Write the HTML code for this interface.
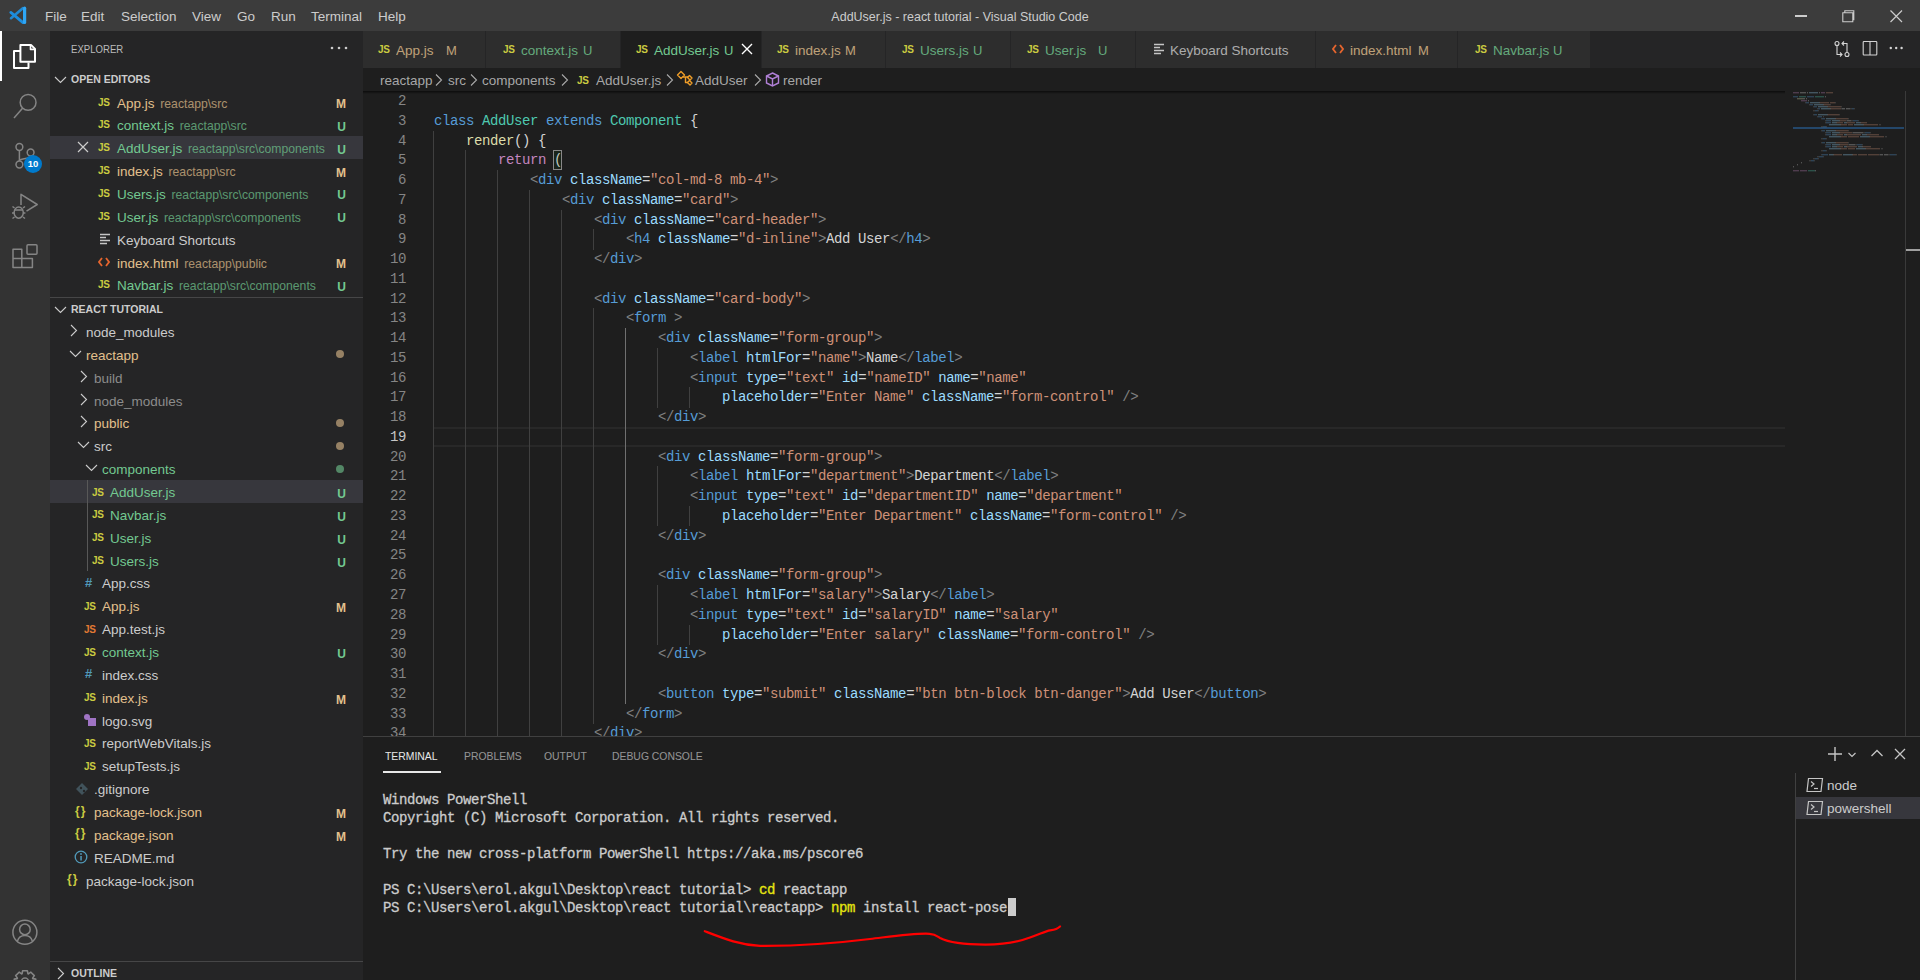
<!DOCTYPE html><html><head><meta charset="utf-8"><style>
*{margin:0;padding:0;box-sizing:border-box}
html,body{width:1920px;height:980px;overflow:hidden;background:#1e1e1e}
body{position:relative;font-family:"Liberation Sans",sans-serif;color:#cccccc}
.a{position:absolute;white-space:pre}
.m{font-family:"Liberation Mono",monospace}
.js{position:absolute;font-weight:bold;font-size:10px;line-height:10px;color:#cbcb41;letter-spacing:-0.3px}
.ln{position:absolute;left:363px;width:43px;text-align:right;font-family:"Liberation Mono",monospace;font-size:14px;letter-spacing:-0.4px;line-height:19.76px;color:#858585;transform:translateY(1px)}
.cl{position:absolute;left:434px;font-family:"Liberation Mono",monospace;font-size:14px;letter-spacing:-0.4px;line-height:19.76px;color:#d4d4d4;white-space:pre;transform:translateY(1px)}
.ig{position:absolute;width:1px;background:#404040}
.k{color:#569cd6}.c{color:#4ec9b0}.p{color:#c586c0}.f{color:#dcdcaa}.g{color:#808080}.t{color:#569cd6}.at{color:#9cdcfe}.s{color:#ce9178}.w{color:#d4d4d4}
.row{position:absolute;height:23px;line-height:23px;font-size:13.5px;white-space:pre;transform:translateY(0.6px)}
.desc{font-size:12.2px;opacity:0.7;margin-left:2px}
.badge{position:absolute;left:320px;width:26px;text-align:right;font-size:12px;font-weight:bold;line-height:23px;transform:translateY(2.5px)}
.dot{position:absolute;left:336px;width:8px;height:8px;border-radius:4px}
</style></head><body><div class="a" style="left:0;top:0;width:1920px;height:31px;background:#3c3c3c"></div><div class="a" style="left:0;top:31px;width:50px;height:949px;background:#333333"></div><div class="a" style="left:50px;top:31px;width:313px;height:949px;background:#252526"></div><div class="a" style="left:363px;top:31px;width:1557px;height:37px;background:#252526"></div><svg class="a" style="left:0;top:0" width="40" height="31" viewBox="0 0 40 31">
<path d="M11 18.2L22.8 8.2" stroke="#2189d1" stroke-width="2.6" stroke-linecap="round"/>
<path d="M10.8 12.4L23 22.6" stroke="#1c8ee0" stroke-width="2.8" stroke-linecap="round"/>
<path d="M24.6 8.2V22.4" stroke="#2ea6f5" stroke-width="3.2" stroke-linecap="round"/>
</svg><div class="a" style="left:45px;top:8px;font-size:13.5px;line-height:17px;color:#cccccc">File</div><div class="a" style="left:81px;top:8px;font-size:13.5px;line-height:17px;color:#cccccc">Edit</div><div class="a" style="left:121px;top:8px;font-size:13.5px;line-height:17px;color:#cccccc">Selection</div><div class="a" style="left:192px;top:8px;font-size:13.5px;line-height:17px;color:#cccccc">View</div><div class="a" style="left:237px;top:8px;font-size:13.5px;line-height:17px;color:#cccccc">Go</div><div class="a" style="left:271px;top:8px;font-size:13.5px;line-height:17px;color:#cccccc">Run</div><div class="a" style="left:311px;top:8px;font-size:13.5px;line-height:17px;color:#cccccc">Terminal</div><div class="a" style="left:378px;top:8px;font-size:13.5px;line-height:17px;color:#cccccc">Help</div><div class="a" style="left:0;top:8px;width:1920px;text-align:center;font-size:13.5px;line-height:17px;color:#cccccc;transform:scaleX(0.925)">AddUser.js - react tutorial - Visual Studio Code</div><div class="a" style="left:1795px;top:15px;width:12px;height:1.6px;background:#cccccc"></div><svg class="a" style="left:1842px;top:9px" width="13" height="14"><path d="M0.8 3.8h10v9h-10z M2.8 3.8v-2h9v9h-1" fill="none" stroke="#cccccc" stroke-width="1.1"/></svg><svg class="a" style="left:1890px;top:9.5px" width="13" height="13"><path d="M0.5 0.5L12 12M12 0.5L0.5 12" stroke="#cccccc" stroke-width="1.2"/></svg><div class="a" style="left:0;top:31px;width:2px;height:50px;background:#ffffff"></div><svg class="a" style="left:0;top:0" width="50" height="980" viewBox="0 0 50 980" fill="none" stroke-linejoin="round">
<g stroke="#ffffff" stroke-width="2">
<path d="M20.4 44.9H31L35 48.9V61.8H20.4Z"/><path d="M30.5 45V49.4H35" stroke-width="1.6"/>
<path d="M20.4 51H14V68H28.5V62.5"/>
</g>
<g stroke="#858585" stroke-width="1.5">
<circle cx="28.1" cy="102.4" r="7.9"/><path d="M22.5 108.3L14 118"/>
<circle cx="19.4" cy="147" r="3.4"/><circle cx="30.6" cy="152.5" r="3.4"/><circle cx="19.4" cy="164.5" r="3.4"/>
<path d="M19.4 150.4V161.1"/><path d="M30.6 155.9C30.6 159 24 158 19.6 160"/>
<path d="M21 205V194.3L37.2 204.5L26.5 211.1"/>
<ellipse cx="18.7" cy="212.6" rx="4.6" ry="5.6"/><path d="M14.5 210H23M12.5 206.5L14.5 208M25 206.5L23 208M12 213H14.2M23.2 213H25.4M12.5 218.5L14.5 217M25 218.5L23 217"/>
<path d="M13 249.2H21.8V267.6H13Z M13 258.4H32.4V267.6H21.8"/><rect x="27" y="244.8" width="10" height="9.5" rx="1"/>
<circle cx="24.9" cy="932.2" r="12"/><circle cx="24.9" cy="929.4" r="5.3"/><path d="M17.5 941C19.5 933.5 30.3 933.5 32.3 941"/>
<path d="M22.1 973.7 L22.6 970.8 L27.4 970.8 L27.9 973.7 L28.4 973.9 L30.9 972.2 L34.3 975.6 L32.6 978.1 L32.8 978.6 L35.7 979.1 L35.7 983.9 L32.8 984.4 L32.6 984.9 L34.3 987.4 L30.9 990.8 L28.4 989.1 L27.9 989.3 L27.4 992.2 L22.6 992.2 L22.1 989.3 L21.6 989.1 L19.1 990.8 L15.7 987.4 L17.4 984.9 L17.2 984.4 L14.3 983.9 L14.3 979.1 L17.2 978.6 L17.4 978.1 L15.7 975.6 L19.1 972.2 L21.6 973.9Z" stroke-width="1.6"/><circle cx="25" cy="981.5" r="3.5"/>
</g>
</svg><div class="a" style="left:24px;top:155px;width:18px;height:18px;border-radius:9px;background:#007acc;color:#fff;font-size:9.5px;font-weight:bold;line-height:18px;text-align:center">10</div><div class="a" style="left:71px;top:42px;font-size:11.3px;line-height:15px;color:#bbbbbb;transform:scaleX(0.85);transform-origin:0 0">EXPLORER</div><svg class="a" style="left:330px;top:46px" width="18" height="4"><circle cx="2" cy="2" r="1.3" fill="#cccccc"/><circle cx="9" cy="2" r="1.3" fill="#cccccc"/><circle cx="16" cy="2" r="1.3" fill="#cccccc"/></svg><svg class="a" style="left:54px;top:73px" width="13" height="13"><path d="M1 4L6.5 9.5L12 4" fill="none" stroke="#cccccc" stroke-width="1.1"/></svg><div class="a" style="left:71px;top:68px;height:23px;line-height:23px;font-size:11.3px;font-weight:bold;color:#cccccc;transform:scaleX(0.93);transform-origin:0 0">OPEN EDITORS</div><div class="js" style="left:98px;top:97.5px">JS</div><div class="row" style="left:117px;top:90.60px;color:#e2c08d">App.js <span class="desc">reactapp\src</span></div><div class="badge" style="top:90.00px;color:#e2c08d">M</div><div class="js" style="left:98px;top:120.36px">JS</div><div class="row" style="left:117px;top:113.46px;color:#73c991">context.js <span class="desc">reactapp\src</span></div><div class="badge" style="top:112.86px;color:#73c991">U</div><div class="a" style="left:50px;top:135.72px;width:313px;height:23px;background:#37373d"></div><svg class="a" style="left:77px;top:141.22px" width="12" height="12"><path d="M1 1L11 11M11 1L1 11" stroke="#cccccc" stroke-width="1.2"/></svg><div class="js" style="left:98px;top:143.22px">JS</div><div class="row" style="left:117px;top:136.32px;color:#73c991">AddUser.js <span class="desc">reactapp\src\components</span></div><div class="badge" style="top:135.72px;color:#73c991">U</div><div class="js" style="left:98px;top:166.07999999999998px">JS</div><div class="row" style="left:117px;top:159.18px;color:#e2c08d">index.js <span class="desc">reactapp\src</span></div><div class="badge" style="top:158.58px;color:#e2c08d">M</div><div class="js" style="left:98px;top:188.94px">JS</div><div class="row" style="left:117px;top:182.04px;color:#73c991">Users.js <span class="desc">reactapp\src\components</span></div><div class="badge" style="top:181.44px;color:#73c991">U</div><div class="js" style="left:98px;top:211.8px">JS</div><div class="row" style="left:117px;top:204.90px;color:#73c991">User.js <span class="desc">reactapp\src\components</span></div><div class="badge" style="top:204.30px;color:#73c991">U</div><svg class="a" style="left:100px;top:232.66px" width="12" height="12"><path d="M0 1.5H10M0 4.5H6M0 7.5H10M0 10.5H7" stroke="#c5c5c5" stroke-width="1.5"/></svg><div class="row" style="left:117px;top:227.76px;color:#cccccc">Keyboard Shortcuts</div><svg class="a" style="left:98px;top:256.52px" width="12" height="10"><path d="M4 1L1 5L4 9M8 1L11 5L8 9" fill="none" stroke="#e5652e" stroke-width="1.8"/></svg><div class="row" style="left:117px;top:250.62px;color:#e2c08d">index.html <span class="desc">reactapp\public</span></div><div class="badge" style="top:250.02px;color:#e2c08d">M</div><div class="js" style="left:98px;top:280.38px">JS</div><div class="row" style="left:117px;top:273.48px;color:#73c991">Navbar.js <span class="desc">reactapp\src\components</span></div><div class="badge" style="top:272.88px;color:#73c991">U</div><div class="a" style="left:50px;top:297px;width:313px;height:1px;background:rgba(204,204,204,0.2)"></div><svg class="a" style="left:54px;top:303px" width="13" height="13"><path d="M1 4L6.5 9.5L12 4" fill="none" stroke="#cccccc" stroke-width="1.1"/></svg><div class="a" style="left:71px;top:298px;height:23px;line-height:23px;font-size:11.3px;font-weight:bold;color:#cccccc;transform:scaleX(0.93);transform-origin:0 0">REACT TUTORIAL</div><svg class="a" style="left:67px;top:324.0px" width="13" height="13"><path d="M4 1L9.5 6.5L4 12" fill="none" stroke="#cccccc" stroke-width="1.1"/></svg><div class="row" style="left:86px;top:320.00px;color:#cccccc">node_modules</div><svg class="a" style="left:69px;top:346.86px" width="13" height="13"><path d="M1 4L6.5 9.5L12 4" fill="none" stroke="#cccccc" stroke-width="1.1"/></svg><div class="row" style="left:86px;top:342.86px;color:#e2c08d">reactapp</div><div class="dot" style="top:350.36px;background:rgba(226,192,141,0.6)"></div><svg class="a" style="left:77px;top:369.72px" width="13" height="13"><path d="M4 1L9.5 6.5L4 12" fill="none" stroke="#cccccc" stroke-width="1.1"/></svg><div class="row" style="left:94px;top:365.72px;color:#8c8c8c">build</div><svg class="a" style="left:77px;top:392.58px" width="13" height="13"><path d="M4 1L9.5 6.5L4 12" fill="none" stroke="#cccccc" stroke-width="1.1"/></svg><div class="row" style="left:94px;top:388.58px;color:#8c8c8c">node_modules</div><svg class="a" style="left:77px;top:415.44px" width="13" height="13"><path d="M4 1L9.5 6.5L4 12" fill="none" stroke="#cccccc" stroke-width="1.1"/></svg><div class="row" style="left:94px;top:411.44px;color:#e2c08d">public</div><div class="dot" style="top:418.94px;background:rgba(226,192,141,0.6)"></div><svg class="a" style="left:77px;top:438.3px" width="13" height="13"><path d="M1 4L6.5 9.5L12 4" fill="none" stroke="#cccccc" stroke-width="1.1"/></svg><div class="row" style="left:94px;top:434.30px;color:#cccccc">src</div><div class="dot" style="top:441.80px;background:rgba(226,192,141,0.6)"></div><svg class="a" style="left:85px;top:461.15999999999997px" width="13" height="13"><path d="M1 4L6.5 9.5L12 4" fill="none" stroke="#cccccc" stroke-width="1.1"/></svg><div class="row" style="left:102px;top:457.16px;color:#73c991">components</div><div class="dot" style="top:464.66px;background:rgba(115,201,145,0.6)"></div><div class="a" style="left:50px;top:480.02px;width:313px;height:23px;background:#37373d"></div><div class="js" style="left:92px;top:487.52px">JS</div><div class="row" style="left:110px;top:480.02px;color:#73c991">AddUser.js</div><div class="badge" style="top:480.02px;color:#73c991">U</div><div class="js" style="left:92px;top:510.38px">JS</div><div class="row" style="left:110px;top:502.88px;color:#73c991">Navbar.js</div><div class="badge" style="top:502.88px;color:#73c991">U</div><div class="js" style="left:92px;top:533.24px">JS</div><div class="row" style="left:110px;top:525.74px;color:#73c991">User.js</div><div class="badge" style="top:525.74px;color:#73c991">U</div><div class="js" style="left:92px;top:556.1px">JS</div><div class="row" style="left:110px;top:548.60px;color:#73c991">Users.js</div><div class="badge" style="top:548.60px;color:#73c991">U</div><div class="a" style="left:85px;top:574.96px;font-size:13px;font-weight:bold;line-height:15px;color:#519aba">#</div><div class="row" style="left:102px;top:571.46px;color:#cccccc">App.css</div><div class="js" style="left:84px;top:601.8199999999999px">JS</div><div class="row" style="left:102px;top:594.32px;color:#e2c08d">App.js</div><div class="badge" style="top:594.32px;color:#e2c08d">M</div><div class="js" style="left:84px;top:624.6800000000001px;color:#e37933">JS</div><div class="row" style="left:102px;top:617.18px;color:#cccccc">App.test.js</div><div class="js" style="left:84px;top:647.54px">JS</div><div class="row" style="left:102px;top:640.04px;color:#73c991">context.js</div><div class="badge" style="top:640.04px;color:#73c991">U</div><div class="a" style="left:85px;top:666.4px;font-size:13px;font-weight:bold;line-height:15px;color:#519aba">#</div><div class="row" style="left:102px;top:662.90px;color:#cccccc">index.css</div><div class="js" style="left:84px;top:693.26px">JS</div><div class="row" style="left:102px;top:685.76px;color:#e2c08d">index.js</div><div class="badge" style="top:685.76px;color:#e2c08d">M</div><svg class="a" style="left:83px;top:713.12px" width="14" height="14"><circle cx="4" cy="4" r="3" fill="#a074c4"/><rect x="5" y="5" width="8" height="8" fill="#a074c4"/></svg><div class="row" style="left:102px;top:708.62px;color:#cccccc">logo.svg</div><div class="js" style="left:84px;top:738.98px">JS</div><div class="row" style="left:102px;top:731.48px;color:#cccccc">reportWebVitals.js</div><div class="js" style="left:84px;top:761.8399999999999px">JS</div><div class="row" style="left:102px;top:754.34px;color:#cccccc">setupTests.js</div><svg class="a" style="left:75px;top:781.7px" width="14" height="14"><path d="M7 1L13 7L7 13L1 7Z" fill="#41535b"/><circle cx="6" cy="6" r="1.2" fill="#252526"/><circle cx="9" cy="9" r="1.2" fill="#252526"/></svg><div class="row" style="left:94px;top:777.20px;color:#cccccc">.gitignore</div><div class="a" style="left:75px;top:803.56px;font-size:12px;font-weight:bold;line-height:15px;color:#cbcb41;letter-spacing:1px">{}</div><div class="row" style="left:94px;top:800.06px;color:#e2c08d">package-lock.json</div><div class="badge" style="top:800.06px;color:#e2c08d">M</div><div class="a" style="left:75px;top:826.42px;font-size:12px;font-weight:bold;line-height:15px;color:#cbcb41;letter-spacing:1px">{}</div><div class="row" style="left:94px;top:822.92px;color:#e2c08d">package.json</div><div class="badge" style="top:822.92px;color:#e2c08d">M</div><svg class="a" style="left:74px;top:850.28px" width="14" height="14"><circle cx="7" cy="7" r="5.8" fill="none" stroke="#519aba" stroke-width="1.3"/><rect x="6.3" y="6" width="1.5" height="4.5" fill="#519aba"/><circle cx="7" cy="4" r="0.9" fill="#519aba"/></svg><div class="row" style="left:94px;top:845.78px;color:#cccccc">README.md</div><div class="a" style="left:67px;top:872.14px;font-size:12px;font-weight:bold;line-height:15px;color:#cbcb41;letter-spacing:1px">{}</div><div class="row" style="left:86px;top:868.64px;color:#cccccc">package-lock.json</div><div class="a" style="left:87px;top:480.02px;width:1px;height:91.44px;background:#585858"></div><div class="a" style="left:50px;top:961px;width:313px;height:1px;background:rgba(204,204,204,0.2)"></div><svg class="a" style="left:54px;top:967px" width="13" height="13"><path d="M4 1L9.5 6.5L4 12" fill="none" stroke="#cccccc" stroke-width="1.1"/></svg><div class="a" style="left:71px;top:962px;height:23px;line-height:23px;font-size:11.3px;font-weight:bold;color:#cccccc;transform:scaleX(0.93);transform-origin:0 0">OUTLINE</div><div class="a" style="left:363px;top:31px;width:122px;height:37px;background:#2d2d2d"></div><div class="js" style="left:378px;top:45px">JS</div><div class="a" style="left:396px;top:42px;font-size:13.5px;line-height:18px;color:#e2c08d;opacity:0.8">App.js</div><div class="a" style="left:446px;top:42px;font-size:13px;line-height:18px;color:#e2c08d;opacity:0.8">M</div><div class="a" style="left:486px;top:31px;width:134px;height:37px;background:#2d2d2d"></div><div class="js" style="left:503px;top:45px">JS</div><div class="a" style="left:521px;top:42px;font-size:13.5px;line-height:18px;color:#73c991;opacity:0.8">context.js</div><div class="a" style="left:583px;top:42px;font-size:13px;line-height:18px;color:#73c991;opacity:0.8">U</div><div class="a" style="left:621px;top:31px;width:140px;height:37px;background:#1e1e1e"></div><div class="js" style="left:636px;top:45px">JS</div><div class="a" style="left:654px;top:42px;font-size:13.5px;line-height:18px;color:#73c991;opacity:1">AddUser.js</div><div class="a" style="left:724px;top:42px;font-size:13px;line-height:18px;color:#73c991;opacity:1">U</div><svg class="a" style="left:741px;top:43px" width="12" height="12"><path d="M1 1L11 11M11 1L1 11" stroke="#ffffff" stroke-width="1.4"/></svg><div class="a" style="left:762px;top:31px;width:123px;height:37px;background:#2d2d2d"></div><div class="js" style="left:777px;top:45px">JS</div><div class="a" style="left:795px;top:42px;font-size:13.5px;line-height:18px;color:#e2c08d;opacity:0.8">index.js</div><div class="a" style="left:845px;top:42px;font-size:13px;line-height:18px;color:#e2c08d;opacity:0.8">M</div><div class="a" style="left:886px;top:31px;width:124px;height:37px;background:#2d2d2d"></div><div class="js" style="left:902px;top:45px">JS</div><div class="a" style="left:920px;top:42px;font-size:13.5px;line-height:18px;color:#73c991;opacity:0.8">Users.js</div><div class="a" style="left:973px;top:42px;font-size:13px;line-height:18px;color:#73c991;opacity:0.8">U</div><div class="a" style="left:1011px;top:31px;width:124px;height:37px;background:#2d2d2d"></div><div class="js" style="left:1027px;top:45px">JS</div><div class="a" style="left:1045px;top:42px;font-size:13.5px;line-height:18px;color:#73c991;opacity:0.8">User.js</div><div class="a" style="left:1098px;top:42px;font-size:13px;line-height:18px;color:#73c991;opacity:0.8">U</div><div class="a" style="left:1136px;top:31px;width:179px;height:37px;background:#2d2d2d"></div><svg class="a" style="left:1154px;top:43px" width="12" height="12"><path d="M0 1.5H10M0 4.5H6M0 7.5H10M0 10.5H7" stroke="#c5c5c5" stroke-width="1.5"/></svg><div class="a" style="left:1170px;top:42px;font-size:13.5px;line-height:18px;color:#cccccc;opacity:0.8">Keyboard Shortcuts</div><div class="a" style="left:1316px;top:31px;width:141px;height:37px;background:#2d2d2d"></div><svg class="a" style="left:1332px;top:44px" width="12" height="10"><path d="M4 1L1 5L4 9M8 1L11 5L8 9" fill="none" stroke="#e5652e" stroke-width="1.8"/></svg><div class="a" style="left:1350px;top:42px;font-size:13.5px;line-height:18px;color:#e2c08d;opacity:0.8">index.html</div><div class="a" style="left:1418px;top:42px;font-size:13px;line-height:18px;color:#e2c08d;opacity:0.8">M</div><div class="a" style="left:1458px;top:31px;width:132px;height:37px;background:#2d2d2d"></div><div class="js" style="left:1475px;top:45px">JS</div><div class="a" style="left:1493px;top:42px;font-size:13.5px;line-height:18px;color:#73c991;opacity:0.8">Navbar.js</div><div class="a" style="left:1553px;top:42px;font-size:13px;line-height:18px;color:#73c991;opacity:0.8">U</div><svg class="a" style="left:1833px;top:40px" width="18" height="18" viewBox="0 0 18 18" fill="none" stroke="#d4d4d4" stroke-width="1.1">
<circle cx="4" cy="3.5" r="2"/><circle cx="14" cy="14.5" r="2"/><path d="M4 5.5V14.5H9M7 12.5L9 14.5L7 16.5"/><path d="M14 12.5V3.5H9M11 1.5L9 3.5L11 5.5"/></svg><svg class="a" style="left:1862px;top:40px" width="16" height="16" viewBox="0 0 16 16" fill="none" stroke="#d4d4d4" stroke-width="1.1">
<rect x="1.2" y="1.5" width="13.6" height="13.5" rx="0.8"/><path d="M8 1.5V15"/></svg><svg class="a" style="left:1889px;top:46.4px" width="16" height="4"><circle cx="1.8" cy="2" r="1.2" fill="#d4d4d4"/><circle cx="7.2" cy="2" r="1.2" fill="#d4d4d4"/><circle cx="12.6" cy="2" r="1.2" fill="#d4d4d4"/></svg><div class="a" style="left:380px;top:72px;font-size:13.5px;line-height:17px;color:rgba(204,204,204,0.8)">reactapp</div><svg class="a" style="left:435px;top:73px" width="8" height="13"><path d="M1 1.5L6.5 7L1 12.5" fill="none" stroke="rgba(204,204,204,0.8)" stroke-width="1.1"/></svg><div class="a" style="left:448px;top:72px;font-size:13.5px;line-height:17px;color:rgba(204,204,204,0.8)">src</div><svg class="a" style="left:470px;top:73px" width="8" height="13"><path d="M1 1.5L6.5 7L1 12.5" fill="none" stroke="rgba(204,204,204,0.8)" stroke-width="1.1"/></svg><div class="a" style="left:482px;top:72px;font-size:13.5px;line-height:17px;color:rgba(204,204,204,0.8)">components</div><svg class="a" style="left:561px;top:73px" width="8" height="13"><path d="M1 1.5L6.5 7L1 12.5" fill="none" stroke="rgba(204,204,204,0.8)" stroke-width="1.1"/></svg><div class="js" style="left:577px;top:76px">JS</div><div class="a" style="left:596px;top:72px;font-size:13.5px;line-height:17px;color:rgba(204,204,204,0.8)">AddUser.js</div><svg class="a" style="left:666px;top:73px" width="8" height="13"><path d="M1 1.5L6.5 7L1 12.5" fill="none" stroke="rgba(204,204,204,0.8)" stroke-width="1.1"/></svg><svg class="a" style="left:676px;top:70px" width="18" height="17" viewBox="0 0 18 17" fill="none" stroke="#ee9d28" stroke-width="1.4" stroke-linejoin="round">
<path d="M1.5 5L5 1.5L8.5 5L5 8.5Z"/><path d="M11.5 7.5L13.5 5.5L16 8L14 10Z"/><path d="M11.5 12.5L13.5 10.5L16 13L14 15Z"/><path d="M7 7H12.5M9.5 7V12.5H12"/></svg><div class="a" style="left:695px;top:72px;font-size:13.5px;line-height:17px;color:rgba(204,204,204,0.8)">AddUser</div><svg class="a" style="left:754px;top:73px" width="8" height="13"><path d="M1 1.5L6.5 7L1 12.5" fill="none" stroke="rgba(204,204,204,0.8)" stroke-width="1.1"/></svg><svg class="a" style="left:765px;top:72px" width="15" height="15" viewBox="0 0 15 15" fill="none" stroke="#b180d7" stroke-width="1.4">
<path d="M7.5 1L13.5 4V11L7.5 14L1.5 11V4Z"/><path d="M1.5 4L7.5 7L13.5 4M7.5 7V14"/></svg><div class="a" style="left:783px;top:72px;font-size:13.5px;line-height:17px;color:rgba(204,204,204,0.8)">render</div><div class="a" style="left:363px;top:91px;width:1430px;height:645px;overflow:hidden"><div class="a" style="left:70px;top:335.92px;width:1352px;height:19.76px;border:2px solid #282828;border-left:none;border-right:none"></div><div class="ln" style="left:0;top:0.00px;color:#858585">2</div><div class="ln" style="left:0;top:19.76px;color:#858585">3</div><div class="cl" style="left:71px;top:19.76px"><span class="k">class</span><span class="w"> </span><span class="c">AddUser</span><span class="w"> </span><span class="k">extends</span><span class="w"> </span><span class="c">Component</span><span class="w"> {</span></div><div class="ln" style="left:0;top:39.52px;color:#858585">4</div><div class="ig" style="left:70px;top:39.52px;height:20.26px;background:#404040"></div><div class="cl" style="left:103px;top:39.52px"><span class="f">render</span><span class="w">() {</span></div><div class="ln" style="left:0;top:59.28px;color:#858585">5</div><div class="ig" style="left:70px;top:59.28px;height:20.26px;background:#404040"></div><div class="ig" style="left:102px;top:59.28px;height:20.26px;background:#404040"></div><div class="cl" style="left:135px;top:59.28px"><span class="p">return</span><span class="w"> (</span></div><div class="ln" style="left:0;top:79.04px;color:#858585">6</div><div class="ig" style="left:70px;top:79.04px;height:20.26px;background:#404040"></div><div class="ig" style="left:102px;top:79.04px;height:20.26px;background:#404040"></div><div class="ig" style="left:134px;top:79.04px;height:20.26px;background:#404040"></div><div class="cl" style="left:167px;top:79.04px"><span class="g">&lt;</span><span class="t">div</span><span class="w"> </span><span class="at">className</span><span class="w">=</span><span class="s">"col-md-8 mb-4"</span><span class="g">&gt;</span></div><div class="ln" style="left:0;top:98.80px;color:#858585">7</div><div class="ig" style="left:70px;top:98.80px;height:20.26px;background:#404040"></div><div class="ig" style="left:102px;top:98.80px;height:20.26px;background:#404040"></div><div class="ig" style="left:134px;top:98.80px;height:20.26px;background:#404040"></div><div class="ig" style="left:166px;top:98.80px;height:20.26px;background:#404040"></div><div class="cl" style="left:199px;top:98.80px"><span class="g">&lt;</span><span class="t">div</span><span class="w"> </span><span class="at">className</span><span class="w">=</span><span class="s">"card"</span><span class="g">&gt;</span></div><div class="ln" style="left:0;top:118.56px;color:#858585">8</div><div class="ig" style="left:70px;top:118.56px;height:20.26px;background:#404040"></div><div class="ig" style="left:102px;top:118.56px;height:20.26px;background:#404040"></div><div class="ig" style="left:134px;top:118.56px;height:20.26px;background:#404040"></div><div class="ig" style="left:166px;top:118.56px;height:20.26px;background:#404040"></div><div class="ig" style="left:198px;top:118.56px;height:20.26px;background:#404040"></div><div class="cl" style="left:231px;top:118.56px"><span class="g">&lt;</span><span class="t">div</span><span class="w"> </span><span class="at">className</span><span class="w">=</span><span class="s">"card-header"</span><span class="g">&gt;</span></div><div class="ln" style="left:0;top:138.32px;color:#858585">9</div><div class="ig" style="left:70px;top:138.32px;height:20.26px;background:#404040"></div><div class="ig" style="left:102px;top:138.32px;height:20.26px;background:#404040"></div><div class="ig" style="left:134px;top:138.32px;height:20.26px;background:#404040"></div><div class="ig" style="left:166px;top:138.32px;height:20.26px;background:#404040"></div><div class="ig" style="left:198px;top:138.32px;height:20.26px;background:#404040"></div><div class="ig" style="left:230px;top:138.32px;height:20.26px;background:#404040"></div><div class="cl" style="left:263px;top:138.32px"><span class="g">&lt;</span><span class="t">h4</span><span class="w"> </span><span class="at">className</span><span class="w">=</span><span class="s">"d-inline"</span><span class="g">&gt;</span><span class="w">Add User</span><span class="g">&lt;/</span><span class="t">h4</span><span class="g">&gt;</span></div><div class="ln" style="left:0;top:158.08px;color:#858585">10</div><div class="ig" style="left:70px;top:158.08px;height:20.26px;background:#404040"></div><div class="ig" style="left:102px;top:158.08px;height:20.26px;background:#404040"></div><div class="ig" style="left:134px;top:158.08px;height:20.26px;background:#404040"></div><div class="ig" style="left:166px;top:158.08px;height:20.26px;background:#404040"></div><div class="ig" style="left:198px;top:158.08px;height:20.26px;background:#404040"></div><div class="cl" style="left:231px;top:158.08px"><span class="g">&lt;/</span><span class="t">div</span><span class="g">&gt;</span></div><div class="ln" style="left:0;top:177.84px;color:#858585">11</div><div class="ig" style="left:70px;top:177.84px;height:20.26px;background:#404040"></div><div class="ig" style="left:102px;top:177.84px;height:20.26px;background:#404040"></div><div class="ig" style="left:134px;top:177.84px;height:20.26px;background:#404040"></div><div class="ig" style="left:166px;top:177.84px;height:20.26px;background:#404040"></div><div class="ig" style="left:198px;top:177.84px;height:20.26px;background:#404040"></div><div class="ln" style="left:0;top:197.60px;color:#858585">12</div><div class="ig" style="left:70px;top:197.60px;height:20.26px;background:#404040"></div><div class="ig" style="left:102px;top:197.60px;height:20.26px;background:#404040"></div><div class="ig" style="left:134px;top:197.60px;height:20.26px;background:#404040"></div><div class="ig" style="left:166px;top:197.60px;height:20.26px;background:#404040"></div><div class="ig" style="left:198px;top:197.60px;height:20.26px;background:#404040"></div><div class="cl" style="left:231px;top:197.60px"><span class="g">&lt;</span><span class="t">div</span><span class="w"> </span><span class="at">className</span><span class="w">=</span><span class="s">"card-body"</span><span class="g">&gt;</span></div><div class="ln" style="left:0;top:217.36px;color:#858585">13</div><div class="ig" style="left:70px;top:217.36px;height:20.26px;background:#404040"></div><div class="ig" style="left:102px;top:217.36px;height:20.26px;background:#404040"></div><div class="ig" style="left:134px;top:217.36px;height:20.26px;background:#404040"></div><div class="ig" style="left:166px;top:217.36px;height:20.26px;background:#404040"></div><div class="ig" style="left:198px;top:217.36px;height:20.26px;background:#404040"></div><div class="ig" style="left:230px;top:217.36px;height:20.26px;background:#404040"></div><div class="cl" style="left:263px;top:217.36px"><span class="g">&lt;</span><span class="t">form</span><span class="w"> </span><span class="g">&gt;</span></div><div class="ln" style="left:0;top:237.12px;color:#858585">14</div><div class="ig" style="left:70px;top:237.12px;height:20.26px;background:#404040"></div><div class="ig" style="left:102px;top:237.12px;height:20.26px;background:#404040"></div><div class="ig" style="left:134px;top:237.12px;height:20.26px;background:#404040"></div><div class="ig" style="left:166px;top:237.12px;height:20.26px;background:#404040"></div><div class="ig" style="left:198px;top:237.12px;height:20.26px;background:#404040"></div><div class="ig" style="left:230px;top:237.12px;height:20.26px;background:#404040"></div><div class="ig" style="left:262px;top:237.12px;height:20.26px;background:#707070"></div><div class="cl" style="left:295px;top:237.12px"><span class="g">&lt;</span><span class="t">div</span><span class="w"> </span><span class="at">className</span><span class="w">=</span><span class="s">"form-group"</span><span class="g">&gt;</span></div><div class="ln" style="left:0;top:256.88px;color:#858585">15</div><div class="ig" style="left:70px;top:256.88px;height:20.26px;background:#404040"></div><div class="ig" style="left:102px;top:256.88px;height:20.26px;background:#404040"></div><div class="ig" style="left:134px;top:256.88px;height:20.26px;background:#404040"></div><div class="ig" style="left:166px;top:256.88px;height:20.26px;background:#404040"></div><div class="ig" style="left:198px;top:256.88px;height:20.26px;background:#404040"></div><div class="ig" style="left:230px;top:256.88px;height:20.26px;background:#404040"></div><div class="ig" style="left:262px;top:256.88px;height:20.26px;background:#707070"></div><div class="ig" style="left:294px;top:256.88px;height:20.26px;background:#404040"></div><div class="cl" style="left:327px;top:256.88px"><span class="g">&lt;</span><span class="t">label</span><span class="w"> </span><span class="at">htmlFor</span><span class="w">=</span><span class="s">"name"</span><span class="g">&gt;</span><span class="w">Name</span><span class="g">&lt;/</span><span class="t">label</span><span class="g">&gt;</span></div><div class="ln" style="left:0;top:276.64px;color:#858585">16</div><div class="ig" style="left:70px;top:276.64px;height:20.26px;background:#404040"></div><div class="ig" style="left:102px;top:276.64px;height:20.26px;background:#404040"></div><div class="ig" style="left:134px;top:276.64px;height:20.26px;background:#404040"></div><div class="ig" style="left:166px;top:276.64px;height:20.26px;background:#404040"></div><div class="ig" style="left:198px;top:276.64px;height:20.26px;background:#404040"></div><div class="ig" style="left:230px;top:276.64px;height:20.26px;background:#404040"></div><div class="ig" style="left:262px;top:276.64px;height:20.26px;background:#707070"></div><div class="ig" style="left:294px;top:276.64px;height:20.26px;background:#404040"></div><div class="cl" style="left:327px;top:276.64px"><span class="g">&lt;</span><span class="t">input</span><span class="w"> </span><span class="at">type</span><span class="w">=</span><span class="s">"text"</span><span class="w"> </span><span class="at">id</span><span class="w">=</span><span class="s">"nameID"</span><span class="w"> </span><span class="at">name</span><span class="w">=</span><span class="s">"name"</span></div><div class="ln" style="left:0;top:296.40px;color:#858585">17</div><div class="ig" style="left:70px;top:296.40px;height:20.26px;background:#404040"></div><div class="ig" style="left:102px;top:296.40px;height:20.26px;background:#404040"></div><div class="ig" style="left:134px;top:296.40px;height:20.26px;background:#404040"></div><div class="ig" style="left:166px;top:296.40px;height:20.26px;background:#404040"></div><div class="ig" style="left:198px;top:296.40px;height:20.26px;background:#404040"></div><div class="ig" style="left:230px;top:296.40px;height:20.26px;background:#404040"></div><div class="ig" style="left:262px;top:296.40px;height:20.26px;background:#707070"></div><div class="ig" style="left:294px;top:296.40px;height:20.26px;background:#404040"></div><div class="ig" style="left:326px;top:296.40px;height:20.26px;background:#404040"></div><div class="cl" style="left:359px;top:296.40px"><span class="at">placeholder</span><span class="w">=</span><span class="s">"Enter Name"</span><span class="w"> </span><span class="at">className</span><span class="w">=</span><span class="s">"form-control"</span><span class="w"> </span><span class="g">/&gt;</span></div><div class="ln" style="left:0;top:316.16px;color:#858585">18</div><div class="ig" style="left:70px;top:316.16px;height:20.26px;background:#404040"></div><div class="ig" style="left:102px;top:316.16px;height:20.26px;background:#404040"></div><div class="ig" style="left:134px;top:316.16px;height:20.26px;background:#404040"></div><div class="ig" style="left:166px;top:316.16px;height:20.26px;background:#404040"></div><div class="ig" style="left:198px;top:316.16px;height:20.26px;background:#404040"></div><div class="ig" style="left:230px;top:316.16px;height:20.26px;background:#404040"></div><div class="ig" style="left:262px;top:316.16px;height:20.26px;background:#707070"></div><div class="cl" style="left:295px;top:316.16px"><span class="g">&lt;/</span><span class="t">div</span><span class="g">&gt;</span></div><div class="ln" style="left:0;top:335.92px;color:#c6c6c6">19</div><div class="ig" style="left:70px;top:335.92px;height:20.26px;background:#404040"></div><div class="ig" style="left:102px;top:335.92px;height:20.26px;background:#404040"></div><div class="ig" style="left:134px;top:335.92px;height:20.26px;background:#404040"></div><div class="ig" style="left:166px;top:335.92px;height:20.26px;background:#404040"></div><div class="ig" style="left:198px;top:335.92px;height:20.26px;background:#404040"></div><div class="ig" style="left:230px;top:335.92px;height:20.26px;background:#404040"></div><div class="ig" style="left:262px;top:335.92px;height:20.26px;background:#707070"></div><div class="ln" style="left:0;top:355.68px;color:#858585">20</div><div class="ig" style="left:70px;top:355.68px;height:20.26px;background:#404040"></div><div class="ig" style="left:102px;top:355.68px;height:20.26px;background:#404040"></div><div class="ig" style="left:134px;top:355.68px;height:20.26px;background:#404040"></div><div class="ig" style="left:166px;top:355.68px;height:20.26px;background:#404040"></div><div class="ig" style="left:198px;top:355.68px;height:20.26px;background:#404040"></div><div class="ig" style="left:230px;top:355.68px;height:20.26px;background:#404040"></div><div class="ig" style="left:262px;top:355.68px;height:20.26px;background:#707070"></div><div class="cl" style="left:295px;top:355.68px"><span class="g">&lt;</span><span class="t">div</span><span class="w"> </span><span class="at">className</span><span class="w">=</span><span class="s">"form-group"</span><span class="g">&gt;</span></div><div class="ln" style="left:0;top:375.44px;color:#858585">21</div><div class="ig" style="left:70px;top:375.44px;height:20.26px;background:#404040"></div><div class="ig" style="left:102px;top:375.44px;height:20.26px;background:#404040"></div><div class="ig" style="left:134px;top:375.44px;height:20.26px;background:#404040"></div><div class="ig" style="left:166px;top:375.44px;height:20.26px;background:#404040"></div><div class="ig" style="left:198px;top:375.44px;height:20.26px;background:#404040"></div><div class="ig" style="left:230px;top:375.44px;height:20.26px;background:#404040"></div><div class="ig" style="left:262px;top:375.44px;height:20.26px;background:#707070"></div><div class="ig" style="left:294px;top:375.44px;height:20.26px;background:#404040"></div><div class="cl" style="left:327px;top:375.44px"><span class="g">&lt;</span><span class="t">label</span><span class="w"> </span><span class="at">htmlFor</span><span class="w">=</span><span class="s">"department"</span><span class="g">&gt;</span><span class="w">Department</span><span class="g">&lt;/</span><span class="t">label</span><span class="g">&gt;</span></div><div class="ln" style="left:0;top:395.20px;color:#858585">22</div><div class="ig" style="left:70px;top:395.20px;height:20.26px;background:#404040"></div><div class="ig" style="left:102px;top:395.20px;height:20.26px;background:#404040"></div><div class="ig" style="left:134px;top:395.20px;height:20.26px;background:#404040"></div><div class="ig" style="left:166px;top:395.20px;height:20.26px;background:#404040"></div><div class="ig" style="left:198px;top:395.20px;height:20.26px;background:#404040"></div><div class="ig" style="left:230px;top:395.20px;height:20.26px;background:#404040"></div><div class="ig" style="left:262px;top:395.20px;height:20.26px;background:#707070"></div><div class="ig" style="left:294px;top:395.20px;height:20.26px;background:#404040"></div><div class="cl" style="left:327px;top:395.20px"><span class="g">&lt;</span><span class="t">input</span><span class="w"> </span><span class="at">type</span><span class="w">=</span><span class="s">"text"</span><span class="w"> </span><span class="at">id</span><span class="w">=</span><span class="s">"departmentID"</span><span class="w"> </span><span class="at">name</span><span class="w">=</span><span class="s">"department"</span></div><div class="ln" style="left:0;top:414.96px;color:#858585">23</div><div class="ig" style="left:70px;top:414.96px;height:20.26px;background:#404040"></div><div class="ig" style="left:102px;top:414.96px;height:20.26px;background:#404040"></div><div class="ig" style="left:134px;top:414.96px;height:20.26px;background:#404040"></div><div class="ig" style="left:166px;top:414.96px;height:20.26px;background:#404040"></div><div class="ig" style="left:198px;top:414.96px;height:20.26px;background:#404040"></div><div class="ig" style="left:230px;top:414.96px;height:20.26px;background:#404040"></div><div class="ig" style="left:262px;top:414.96px;height:20.26px;background:#707070"></div><div class="ig" style="left:294px;top:414.96px;height:20.26px;background:#404040"></div><div class="ig" style="left:326px;top:414.96px;height:20.26px;background:#404040"></div><div class="cl" style="left:359px;top:414.96px"><span class="at">placeholder</span><span class="w">=</span><span class="s">"Enter Department"</span><span class="w"> </span><span class="at">className</span><span class="w">=</span><span class="s">"form-control"</span><span class="w"> </span><span class="g">/&gt;</span></div><div class="ln" style="left:0;top:434.72px;color:#858585">24</div><div class="ig" style="left:70px;top:434.72px;height:20.26px;background:#404040"></div><div class="ig" style="left:102px;top:434.72px;height:20.26px;background:#404040"></div><div class="ig" style="left:134px;top:434.72px;height:20.26px;background:#404040"></div><div class="ig" style="left:166px;top:434.72px;height:20.26px;background:#404040"></div><div class="ig" style="left:198px;top:434.72px;height:20.26px;background:#404040"></div><div class="ig" style="left:230px;top:434.72px;height:20.26px;background:#404040"></div><div class="ig" style="left:262px;top:434.72px;height:20.26px;background:#707070"></div><div class="cl" style="left:295px;top:434.72px"><span class="g">&lt;/</span><span class="t">div</span><span class="g">&gt;</span></div><div class="ln" style="left:0;top:454.48px;color:#858585">25</div><div class="ig" style="left:70px;top:454.48px;height:20.26px;background:#404040"></div><div class="ig" style="left:102px;top:454.48px;height:20.26px;background:#404040"></div><div class="ig" style="left:134px;top:454.48px;height:20.26px;background:#404040"></div><div class="ig" style="left:166px;top:454.48px;height:20.26px;background:#404040"></div><div class="ig" style="left:198px;top:454.48px;height:20.26px;background:#404040"></div><div class="ig" style="left:230px;top:454.48px;height:20.26px;background:#404040"></div><div class="ig" style="left:262px;top:454.48px;height:20.26px;background:#707070"></div><div class="ln" style="left:0;top:474.24px;color:#858585">26</div><div class="ig" style="left:70px;top:474.24px;height:20.26px;background:#404040"></div><div class="ig" style="left:102px;top:474.24px;height:20.26px;background:#404040"></div><div class="ig" style="left:134px;top:474.24px;height:20.26px;background:#404040"></div><div class="ig" style="left:166px;top:474.24px;height:20.26px;background:#404040"></div><div class="ig" style="left:198px;top:474.24px;height:20.26px;background:#404040"></div><div class="ig" style="left:230px;top:474.24px;height:20.26px;background:#404040"></div><div class="ig" style="left:262px;top:474.24px;height:20.26px;background:#707070"></div><div class="cl" style="left:295px;top:474.24px"><span class="g">&lt;</span><span class="t">div</span><span class="w"> </span><span class="at">className</span><span class="w">=</span><span class="s">"form-group"</span><span class="g">&gt;</span></div><div class="ln" style="left:0;top:494.00px;color:#858585">27</div><div class="ig" style="left:70px;top:494.00px;height:20.26px;background:#404040"></div><div class="ig" style="left:102px;top:494.00px;height:20.26px;background:#404040"></div><div class="ig" style="left:134px;top:494.00px;height:20.26px;background:#404040"></div><div class="ig" style="left:166px;top:494.00px;height:20.26px;background:#404040"></div><div class="ig" style="left:198px;top:494.00px;height:20.26px;background:#404040"></div><div class="ig" style="left:230px;top:494.00px;height:20.26px;background:#404040"></div><div class="ig" style="left:262px;top:494.00px;height:20.26px;background:#707070"></div><div class="ig" style="left:294px;top:494.00px;height:20.26px;background:#404040"></div><div class="cl" style="left:327px;top:494.00px"><span class="g">&lt;</span><span class="t">label</span><span class="w"> </span><span class="at">htmlFor</span><span class="w">=</span><span class="s">"salary"</span><span class="g">&gt;</span><span class="w">Salary</span><span class="g">&lt;/</span><span class="t">label</span><span class="g">&gt;</span></div><div class="ln" style="left:0;top:513.76px;color:#858585">28</div><div class="ig" style="left:70px;top:513.76px;height:20.26px;background:#404040"></div><div class="ig" style="left:102px;top:513.76px;height:20.26px;background:#404040"></div><div class="ig" style="left:134px;top:513.76px;height:20.26px;background:#404040"></div><div class="ig" style="left:166px;top:513.76px;height:20.26px;background:#404040"></div><div class="ig" style="left:198px;top:513.76px;height:20.26px;background:#404040"></div><div class="ig" style="left:230px;top:513.76px;height:20.26px;background:#404040"></div><div class="ig" style="left:262px;top:513.76px;height:20.26px;background:#707070"></div><div class="ig" style="left:294px;top:513.76px;height:20.26px;background:#404040"></div><div class="cl" style="left:327px;top:513.76px"><span class="g">&lt;</span><span class="t">input</span><span class="w"> </span><span class="at">type</span><span class="w">=</span><span class="s">"text"</span><span class="w"> </span><span class="at">id</span><span class="w">=</span><span class="s">"salaryID"</span><span class="w"> </span><span class="at">name</span><span class="w">=</span><span class="s">"salary"</span></div><div class="ln" style="left:0;top:533.52px;color:#858585">29</div><div class="ig" style="left:70px;top:533.52px;height:20.26px;background:#404040"></div><div class="ig" style="left:102px;top:533.52px;height:20.26px;background:#404040"></div><div class="ig" style="left:134px;top:533.52px;height:20.26px;background:#404040"></div><div class="ig" style="left:166px;top:533.52px;height:20.26px;background:#404040"></div><div class="ig" style="left:198px;top:533.52px;height:20.26px;background:#404040"></div><div class="ig" style="left:230px;top:533.52px;height:20.26px;background:#404040"></div><div class="ig" style="left:262px;top:533.52px;height:20.26px;background:#707070"></div><div class="ig" style="left:294px;top:533.52px;height:20.26px;background:#404040"></div><div class="ig" style="left:326px;top:533.52px;height:20.26px;background:#404040"></div><div class="cl" style="left:359px;top:533.52px"><span class="at">placeholder</span><span class="w">=</span><span class="s">"Enter salary"</span><span class="w"> </span><span class="at">className</span><span class="w">=</span><span class="s">"form-control"</span><span class="w"> </span><span class="g">/&gt;</span></div><div class="ln" style="left:0;top:553.28px;color:#858585">30</div><div class="ig" style="left:70px;top:553.28px;height:20.26px;background:#404040"></div><div class="ig" style="left:102px;top:553.28px;height:20.26px;background:#404040"></div><div class="ig" style="left:134px;top:553.28px;height:20.26px;background:#404040"></div><div class="ig" style="left:166px;top:553.28px;height:20.26px;background:#404040"></div><div class="ig" style="left:198px;top:553.28px;height:20.26px;background:#404040"></div><div class="ig" style="left:230px;top:553.28px;height:20.26px;background:#404040"></div><div class="ig" style="left:262px;top:553.28px;height:20.26px;background:#707070"></div><div class="cl" style="left:295px;top:553.28px"><span class="g">&lt;/</span><span class="t">div</span><span class="g">&gt;</span></div><div class="ln" style="left:0;top:573.04px;color:#858585">31</div><div class="ig" style="left:70px;top:573.04px;height:20.26px;background:#404040"></div><div class="ig" style="left:102px;top:573.04px;height:20.26px;background:#404040"></div><div class="ig" style="left:134px;top:573.04px;height:20.26px;background:#404040"></div><div class="ig" style="left:166px;top:573.04px;height:20.26px;background:#404040"></div><div class="ig" style="left:198px;top:573.04px;height:20.26px;background:#404040"></div><div class="ig" style="left:230px;top:573.04px;height:20.26px;background:#404040"></div><div class="ig" style="left:262px;top:573.04px;height:20.26px;background:#707070"></div><div class="ln" style="left:0;top:592.80px;color:#858585">32</div><div class="ig" style="left:70px;top:592.80px;height:20.26px;background:#404040"></div><div class="ig" style="left:102px;top:592.80px;height:20.26px;background:#404040"></div><div class="ig" style="left:134px;top:592.80px;height:20.26px;background:#404040"></div><div class="ig" style="left:166px;top:592.80px;height:20.26px;background:#404040"></div><div class="ig" style="left:198px;top:592.80px;height:20.26px;background:#404040"></div><div class="ig" style="left:230px;top:592.80px;height:20.26px;background:#404040"></div><div class="ig" style="left:262px;top:592.80px;height:20.26px;background:#707070"></div><div class="cl" style="left:295px;top:592.80px"><span class="g">&lt;</span><span class="t">button</span><span class="w"> </span><span class="at">type</span><span class="w">=</span><span class="s">"submit"</span><span class="w"> </span><span class="at">className</span><span class="w">=</span><span class="s">"btn btn-block btn-danger"</span><span class="g">&gt;</span><span class="w">Add User</span><span class="g">&lt;/</span><span class="t">button</span><span class="g">&gt;</span></div><div class="ln" style="left:0;top:612.56px;color:#858585">33</div><div class="ig" style="left:70px;top:612.56px;height:20.26px;background:#404040"></div><div class="ig" style="left:102px;top:612.56px;height:20.26px;background:#404040"></div><div class="ig" style="left:134px;top:612.56px;height:20.26px;background:#404040"></div><div class="ig" style="left:166px;top:612.56px;height:20.26px;background:#404040"></div><div class="ig" style="left:198px;top:612.56px;height:20.26px;background:#404040"></div><div class="ig" style="left:230px;top:612.56px;height:20.26px;background:#404040"></div><div class="cl" style="left:263px;top:612.56px"><span class="g">&lt;/</span><span class="t">form</span><span class="g">&gt;</span></div><div class="ln" style="left:0;top:632.32px;color:#858585">34</div><div class="ig" style="left:70px;top:632.32px;height:20.26px;background:#404040"></div><div class="ig" style="left:102px;top:632.32px;height:20.26px;background:#404040"></div><div class="ig" style="left:134px;top:632.32px;height:20.26px;background:#404040"></div><div class="ig" style="left:166px;top:632.32px;height:20.26px;background:#404040"></div><div class="ig" style="left:198px;top:632.32px;height:20.26px;background:#404040"></div><div class="cl" style="left:231px;top:632.32px"><span class="g">&lt;/</span><span class="t">div</span><span class="g">&gt;</span></div><div class="a" style="left:190px;top:59.28px;width:9px;height:19.76px;border:1px solid #888888;background:rgba(0,100,0,0.1)"></div></div><div class="a" style="left:363px;top:91px;width:1422px;height:3px;background:linear-gradient(#000000 0%, rgba(0,0,0,0) 100%);opacity:0.6"></div><svg class="a" style="left:1793px;top:91px" width="112" height="100"><rect x="0" y="36" width="111" height="2" fill="#264f78" opacity="0.85"/><rect x="0" y="1" width="6" height="1.4" fill="#c586c0" opacity="0.3"/><rect x="7" y="1" width="6" height="1.4" fill="#d4d4d4" opacity="0.3"/><rect x="14" y="1" width="1" height="1.4" fill="#d4d4d4" opacity="0.3"/><rect x="16" y="1" width="9" height="1.4" fill="#9cdcfe" opacity="0.3"/><rect x="26" y="1" width="1" height="1.4" fill="#d4d4d4" opacity="0.3"/><rect x="28" y="1" width="4" height="1.4" fill="#c586c0" opacity="0.3"/><rect x="33" y="1" width="7" height="1.4" fill="#ce9178" opacity="0.3"/><rect x="0" y="5" width="5" height="1.4" fill="#569cd6" opacity="0.3"/><rect x="6" y="5" width="7" height="1.4" fill="#4ec9b0" opacity="0.3"/><rect x="14" y="5" width="7" height="1.4" fill="#569cd6" opacity="0.3"/><rect x="22" y="5" width="9" height="1.4" fill="#4ec9b0" opacity="0.3"/><rect x="32" y="5" width="1" height="1.4" fill="#d4d4d4" opacity="0.3"/><rect x="4" y="7" width="6" height="1.4" fill="#dcdcaa" opacity="0.3"/><rect x="10" y="7" width="2" height="1.4" fill="#d4d4d4" opacity="0.3"/><rect x="13" y="7" width="1" height="1.4" fill="#d4d4d4" opacity="0.3"/><rect x="8" y="9" width="6" height="1.4" fill="#c586c0" opacity="0.3"/><rect x="15" y="9" width="1" height="1.4" fill="#d4d4d4" opacity="0.3"/><rect x="12" y="11" width="1" height="1.4" fill="#808080" opacity="0.3"/><rect x="13" y="11" width="3" height="1.4" fill="#569cd6" opacity="0.3"/><rect x="17" y="11" width="9" height="1.4" fill="#9cdcfe" opacity="0.3"/><rect x="26" y="11" width="1" height="1.4" fill="#d4d4d4" opacity="0.3"/><rect x="27" y="11" width="9" height="1.4" fill="#ce9178" opacity="0.3"/><rect x="37" y="11" width="5" height="1.4" fill="#ce9178" opacity="0.3"/><rect x="42" y="11" width="1" height="1.4" fill="#808080" opacity="0.3"/><rect x="16" y="13" width="1" height="1.4" fill="#808080" opacity="0.3"/><rect x="17" y="13" width="3" height="1.4" fill="#569cd6" opacity="0.3"/><rect x="21" y="13" width="9" height="1.4" fill="#9cdcfe" opacity="0.3"/><rect x="30" y="13" width="1" height="1.4" fill="#d4d4d4" opacity="0.3"/><rect x="31" y="13" width="6" height="1.4" fill="#ce9178" opacity="0.3"/><rect x="37" y="13" width="1" height="1.4" fill="#808080" opacity="0.3"/><rect x="20" y="15" width="1" height="1.4" fill="#808080" opacity="0.3"/><rect x="21" y="15" width="3" height="1.4" fill="#569cd6" opacity="0.3"/><rect x="25" y="15" width="9" height="1.4" fill="#9cdcfe" opacity="0.3"/><rect x="34" y="15" width="1" height="1.4" fill="#d4d4d4" opacity="0.3"/><rect x="35" y="15" width="13" height="1.4" fill="#ce9178" opacity="0.3"/><rect x="48" y="15" width="1" height="1.4" fill="#808080" opacity="0.3"/><rect x="24" y="17" width="1" height="1.4" fill="#808080" opacity="0.3"/><rect x="25" y="17" width="2" height="1.4" fill="#569cd6" opacity="0.3"/><rect x="28" y="17" width="9" height="1.4" fill="#9cdcfe" opacity="0.3"/><rect x="37" y="17" width="1" height="1.4" fill="#d4d4d4" opacity="0.3"/><rect x="38" y="17" width="10" height="1.4" fill="#ce9178" opacity="0.3"/><rect x="48" y="17" width="1" height="1.4" fill="#808080" opacity="0.3"/><rect x="49" y="17" width="3" height="1.4" fill="#d4d4d4" opacity="0.3"/><rect x="53" y="17" width="4" height="1.4" fill="#d4d4d4" opacity="0.3"/><rect x="57" y="17" width="2" height="1.4" fill="#808080" opacity="0.3"/><rect x="59" y="17" width="2" height="1.4" fill="#569cd6" opacity="0.3"/><rect x="61" y="17" width="1" height="1.4" fill="#808080" opacity="0.3"/><rect x="20" y="19" width="2" height="1.4" fill="#808080" opacity="0.3"/><rect x="22" y="19" width="3" height="1.4" fill="#569cd6" opacity="0.3"/><rect x="25" y="19" width="1" height="1.4" fill="#808080" opacity="0.3"/><rect x="20" y="23" width="1" height="1.4" fill="#808080" opacity="0.3"/><rect x="21" y="23" width="3" height="1.4" fill="#569cd6" opacity="0.3"/><rect x="25" y="23" width="9" height="1.4" fill="#9cdcfe" opacity="0.3"/><rect x="34" y="23" width="1" height="1.4" fill="#d4d4d4" opacity="0.3"/><rect x="35" y="23" width="11" height="1.4" fill="#ce9178" opacity="0.3"/><rect x="46" y="23" width="1" height="1.4" fill="#808080" opacity="0.3"/><rect x="24" y="25" width="1" height="1.4" fill="#808080" opacity="0.3"/><rect x="25" y="25" width="4" height="1.4" fill="#569cd6" opacity="0.3"/><rect x="30" y="25" width="1" height="1.4" fill="#808080" opacity="0.3"/><rect x="28" y="27" width="1" height="1.4" fill="#808080" opacity="0.3"/><rect x="29" y="27" width="3" height="1.4" fill="#569cd6" opacity="0.3"/><rect x="33" y="27" width="9" height="1.4" fill="#9cdcfe" opacity="0.3"/><rect x="42" y="27" width="1" height="1.4" fill="#d4d4d4" opacity="0.3"/><rect x="43" y="27" width="12" height="1.4" fill="#ce9178" opacity="0.3"/><rect x="55" y="27" width="1" height="1.4" fill="#808080" opacity="0.3"/><rect x="32" y="29" width="1" height="1.4" fill="#808080" opacity="0.3"/><rect x="33" y="29" width="5" height="1.4" fill="#569cd6" opacity="0.3"/><rect x="39" y="29" width="7" height="1.4" fill="#9cdcfe" opacity="0.3"/><rect x="46" y="29" width="1" height="1.4" fill="#d4d4d4" opacity="0.3"/><rect x="47" y="29" width="6" height="1.4" fill="#ce9178" opacity="0.3"/><rect x="53" y="29" width="1" height="1.4" fill="#808080" opacity="0.3"/><rect x="54" y="29" width="4" height="1.4" fill="#d4d4d4" opacity="0.3"/><rect x="58" y="29" width="2" height="1.4" fill="#808080" opacity="0.3"/><rect x="60" y="29" width="5" height="1.4" fill="#569cd6" opacity="0.3"/><rect x="65" y="29" width="1" height="1.4" fill="#808080" opacity="0.3"/><rect x="32" y="31" width="1" height="1.4" fill="#808080" opacity="0.3"/><rect x="33" y="31" width="5" height="1.4" fill="#569cd6" opacity="0.3"/><rect x="39" y="31" width="4" height="1.4" fill="#9cdcfe" opacity="0.3"/><rect x="43" y="31" width="1" height="1.4" fill="#d4d4d4" opacity="0.3"/><rect x="44" y="31" width="6" height="1.4" fill="#ce9178" opacity="0.3"/><rect x="51" y="31" width="2" height="1.4" fill="#9cdcfe" opacity="0.3"/><rect x="53" y="31" width="1" height="1.4" fill="#d4d4d4" opacity="0.3"/><rect x="54" y="31" width="8" height="1.4" fill="#ce9178" opacity="0.3"/><rect x="63" y="31" width="4" height="1.4" fill="#9cdcfe" opacity="0.3"/><rect x="67" y="31" width="1" height="1.4" fill="#d4d4d4" opacity="0.3"/><rect x="68" y="31" width="6" height="1.4" fill="#ce9178" opacity="0.3"/><rect x="36" y="33" width="11" height="1.4" fill="#9cdcfe" opacity="0.3"/><rect x="47" y="33" width="1" height="1.4" fill="#d4d4d4" opacity="0.3"/><rect x="48" y="33" width="6" height="1.4" fill="#ce9178" opacity="0.3"/><rect x="55" y="33" width="5" height="1.4" fill="#ce9178" opacity="0.3"/><rect x="61" y="33" width="9" height="1.4" fill="#9cdcfe" opacity="0.3"/><rect x="70" y="33" width="1" height="1.4" fill="#d4d4d4" opacity="0.3"/><rect x="71" y="33" width="14" height="1.4" fill="#ce9178" opacity="0.3"/><rect x="86" y="33" width="2" height="1.4" fill="#808080" opacity="0.3"/><rect x="28" y="35" width="2" height="1.4" fill="#808080" opacity="0.3"/><rect x="30" y="35" width="3" height="1.4" fill="#569cd6" opacity="0.3"/><rect x="33" y="35" width="1" height="1.4" fill="#808080" opacity="0.3"/><rect x="28" y="39" width="1" height="1.4" fill="#808080" opacity="0.3"/><rect x="29" y="39" width="3" height="1.4" fill="#569cd6" opacity="0.3"/><rect x="33" y="39" width="9" height="1.4" fill="#9cdcfe" opacity="0.3"/><rect x="42" y="39" width="1" height="1.4" fill="#d4d4d4" opacity="0.3"/><rect x="43" y="39" width="12" height="1.4" fill="#ce9178" opacity="0.3"/><rect x="55" y="39" width="1" height="1.4" fill="#808080" opacity="0.3"/><rect x="32" y="41" width="1" height="1.4" fill="#808080" opacity="0.3"/><rect x="33" y="41" width="5" height="1.4" fill="#569cd6" opacity="0.3"/><rect x="39" y="41" width="7" height="1.4" fill="#9cdcfe" opacity="0.3"/><rect x="46" y="41" width="1" height="1.4" fill="#d4d4d4" opacity="0.3"/><rect x="47" y="41" width="12" height="1.4" fill="#ce9178" opacity="0.3"/><rect x="59" y="41" width="1" height="1.4" fill="#808080" opacity="0.3"/><rect x="60" y="41" width="10" height="1.4" fill="#d4d4d4" opacity="0.3"/><rect x="70" y="41" width="2" height="1.4" fill="#808080" opacity="0.3"/><rect x="72" y="41" width="5" height="1.4" fill="#569cd6" opacity="0.3"/><rect x="77" y="41" width="1" height="1.4" fill="#808080" opacity="0.3"/><rect x="32" y="43" width="1" height="1.4" fill="#808080" opacity="0.3"/><rect x="33" y="43" width="5" height="1.4" fill="#569cd6" opacity="0.3"/><rect x="39" y="43" width="4" height="1.4" fill="#9cdcfe" opacity="0.3"/><rect x="43" y="43" width="1" height="1.4" fill="#d4d4d4" opacity="0.3"/><rect x="44" y="43" width="6" height="1.4" fill="#ce9178" opacity="0.3"/><rect x="51" y="43" width="2" height="1.4" fill="#9cdcfe" opacity="0.3"/><rect x="53" y="43" width="1" height="1.4" fill="#d4d4d4" opacity="0.3"/><rect x="54" y="43" width="14" height="1.4" fill="#ce9178" opacity="0.3"/><rect x="69" y="43" width="4" height="1.4" fill="#9cdcfe" opacity="0.3"/><rect x="73" y="43" width="1" height="1.4" fill="#d4d4d4" opacity="0.3"/><rect x="74" y="43" width="12" height="1.4" fill="#ce9178" opacity="0.3"/><rect x="36" y="45" width="11" height="1.4" fill="#9cdcfe" opacity="0.3"/><rect x="47" y="45" width="1" height="1.4" fill="#d4d4d4" opacity="0.3"/><rect x="48" y="45" width="6" height="1.4" fill="#ce9178" opacity="0.3"/><rect x="55" y="45" width="11" height="1.4" fill="#ce9178" opacity="0.3"/><rect x="67" y="45" width="9" height="1.4" fill="#9cdcfe" opacity="0.3"/><rect x="76" y="45" width="1" height="1.4" fill="#d4d4d4" opacity="0.3"/><rect x="77" y="45" width="14" height="1.4" fill="#ce9178" opacity="0.3"/><rect x="92" y="45" width="2" height="1.4" fill="#808080" opacity="0.3"/><rect x="28" y="47" width="2" height="1.4" fill="#808080" opacity="0.3"/><rect x="30" y="47" width="3" height="1.4" fill="#569cd6" opacity="0.3"/><rect x="33" y="47" width="1" height="1.4" fill="#808080" opacity="0.3"/><rect x="28" y="51" width="1" height="1.4" fill="#808080" opacity="0.3"/><rect x="29" y="51" width="3" height="1.4" fill="#569cd6" opacity="0.3"/><rect x="33" y="51" width="9" height="1.4" fill="#9cdcfe" opacity="0.3"/><rect x="42" y="51" width="1" height="1.4" fill="#d4d4d4" opacity="0.3"/><rect x="43" y="51" width="12" height="1.4" fill="#ce9178" opacity="0.3"/><rect x="55" y="51" width="1" height="1.4" fill="#808080" opacity="0.3"/><rect x="32" y="53" width="1" height="1.4" fill="#808080" opacity="0.3"/><rect x="33" y="53" width="5" height="1.4" fill="#569cd6" opacity="0.3"/><rect x="39" y="53" width="7" height="1.4" fill="#9cdcfe" opacity="0.3"/><rect x="46" y="53" width="1" height="1.4" fill="#d4d4d4" opacity="0.3"/><rect x="47" y="53" width="8" height="1.4" fill="#ce9178" opacity="0.3"/><rect x="55" y="53" width="1" height="1.4" fill="#808080" opacity="0.3"/><rect x="56" y="53" width="6" height="1.4" fill="#d4d4d4" opacity="0.3"/><rect x="62" y="53" width="2" height="1.4" fill="#808080" opacity="0.3"/><rect x="64" y="53" width="5" height="1.4" fill="#569cd6" opacity="0.3"/><rect x="69" y="53" width="1" height="1.4" fill="#808080" opacity="0.3"/><rect x="32" y="55" width="1" height="1.4" fill="#808080" opacity="0.3"/><rect x="33" y="55" width="5" height="1.4" fill="#569cd6" opacity="0.3"/><rect x="39" y="55" width="4" height="1.4" fill="#9cdcfe" opacity="0.3"/><rect x="43" y="55" width="1" height="1.4" fill="#d4d4d4" opacity="0.3"/><rect x="44" y="55" width="6" height="1.4" fill="#ce9178" opacity="0.3"/><rect x="51" y="55" width="2" height="1.4" fill="#9cdcfe" opacity="0.3"/><rect x="53" y="55" width="1" height="1.4" fill="#d4d4d4" opacity="0.3"/><rect x="54" y="55" width="10" height="1.4" fill="#ce9178" opacity="0.3"/><rect x="65" y="55" width="4" height="1.4" fill="#9cdcfe" opacity="0.3"/><rect x="69" y="55" width="1" height="1.4" fill="#d4d4d4" opacity="0.3"/><rect x="70" y="55" width="8" height="1.4" fill="#ce9178" opacity="0.3"/><rect x="36" y="57" width="11" height="1.4" fill="#9cdcfe" opacity="0.3"/><rect x="47" y="57" width="1" height="1.4" fill="#d4d4d4" opacity="0.3"/><rect x="48" y="57" width="6" height="1.4" fill="#ce9178" opacity="0.3"/><rect x="55" y="57" width="7" height="1.4" fill="#ce9178" opacity="0.3"/><rect x="63" y="57" width="9" height="1.4" fill="#9cdcfe" opacity="0.3"/><rect x="72" y="57" width="1" height="1.4" fill="#d4d4d4" opacity="0.3"/><rect x="73" y="57" width="14" height="1.4" fill="#ce9178" opacity="0.3"/><rect x="88" y="57" width="2" height="1.4" fill="#808080" opacity="0.3"/><rect x="28" y="59" width="2" height="1.4" fill="#808080" opacity="0.3"/><rect x="30" y="59" width="3" height="1.4" fill="#569cd6" opacity="0.3"/><rect x="33" y="59" width="1" height="1.4" fill="#808080" opacity="0.3"/><rect x="28" y="63" width="1" height="1.4" fill="#808080" opacity="0.3"/><rect x="29" y="63" width="6" height="1.4" fill="#569cd6" opacity="0.3"/><rect x="36" y="63" width="4" height="1.4" fill="#9cdcfe" opacity="0.3"/><rect x="40" y="63" width="1" height="1.4" fill="#d4d4d4" opacity="0.3"/><rect x="41" y="63" width="8" height="1.4" fill="#ce9178" opacity="0.3"/><rect x="50" y="63" width="9" height="1.4" fill="#9cdcfe" opacity="0.3"/><rect x="59" y="63" width="1" height="1.4" fill="#d4d4d4" opacity="0.3"/><rect x="60" y="63" width="4" height="1.4" fill="#ce9178" opacity="0.3"/><rect x="65" y="63" width="9" height="1.4" fill="#ce9178" opacity="0.3"/><rect x="75" y="63" width="11" height="1.4" fill="#ce9178" opacity="0.3"/><rect x="86" y="63" width="1" height="1.4" fill="#808080" opacity="0.3"/><rect x="87" y="63" width="3" height="1.4" fill="#d4d4d4" opacity="0.3"/><rect x="91" y="63" width="4" height="1.4" fill="#d4d4d4" opacity="0.3"/><rect x="95" y="63" width="2" height="1.4" fill="#808080" opacity="0.3"/><rect x="97" y="63" width="6" height="1.4" fill="#569cd6" opacity="0.3"/><rect x="103" y="63" width="1" height="1.4" fill="#808080" opacity="0.3"/><rect x="24" y="65" width="2" height="1.4" fill="#808080" opacity="0.3"/><rect x="26" y="65" width="4" height="1.4" fill="#569cd6" opacity="0.3"/><rect x="30" y="65" width="1" height="1.4" fill="#808080" opacity="0.3"/><rect x="20" y="67" width="2" height="1.4" fill="#808080" opacity="0.3"/><rect x="22" y="67" width="3" height="1.4" fill="#569cd6" opacity="0.3"/><rect x="25" y="67" width="1" height="1.4" fill="#808080" opacity="0.3"/><rect x="16" y="69" width="2" height="1.4" fill="#808080" opacity="0.3"/><rect x="18" y="69" width="3" height="1.4" fill="#569cd6" opacity="0.3"/><rect x="21" y="69" width="1" height="1.4" fill="#808080" opacity="0.3"/><rect x="8" y="71" width="1" height="1.4" fill="#d4d4d4" opacity="0.3"/><rect x="4" y="73" width="1" height="1.4" fill="#d4d4d4" opacity="0.3"/><rect x="0" y="75" width="1" height="1.4" fill="#d4d4d4" opacity="0.3"/><rect x="0" y="79" width="6" height="1.4" fill="#c586c0" opacity="0.3"/><rect x="7" y="79" width="7" height="1.4" fill="#c586c0" opacity="0.3"/><rect x="15" y="79" width="7" height="1.4" fill="#4ec9b0" opacity="0.3"/><rect x="22" y="79" width="1" height="1.4" fill="#d4d4d4" opacity="0.3"/></svg><div class="a" style="left:1905px;top:91px;width:1px;height:645px;background:rgba(127,127,127,0.3)"></div><div class="a" style="left:1906px;top:249px;width:14px;height:2px;background:#a0a0a0"></div><div class="a" style="left:363px;top:736px;width:1557px;height:244px;background:#1e1e1e"></div><div class="a" style="left:363px;top:736px;width:1557px;height:1px;background:rgba(128,128,128,0.35)"></div><div class="a" style="left:385px;top:749px;font-size:11.3px;line-height:15px;color:#e7e7e7;transform:scaleX(0.92);transform-origin:0 0">TERMINAL</div><div class="a" style="left:464px;top:749px;font-size:11.3px;line-height:15px;color:rgba(231,231,231,0.6);transform:scaleX(0.92);transform-origin:0 0">PROBLEMS</div><div class="a" style="left:544px;top:749px;font-size:11.3px;line-height:15px;color:rgba(231,231,231,0.6);transform:scaleX(0.92);transform-origin:0 0">OUTPUT</div><div class="a" style="left:612px;top:749px;font-size:11.3px;line-height:15px;color:rgba(231,231,231,0.6);transform:scaleX(0.92);transform-origin:0 0">DEBUG CONSOLE</div><div class="a" style="left:383px;top:771px;width:58px;height:2px;background:#e7e7e7"></div><svg class="a" style="left:1827px;top:746px" width="16" height="16" viewBox="0 0 16 16" fill="none" stroke="#c5c5c5" stroke-width="1.4"><path d="M8 1V15M1 8H15"/></svg><svg class="a" style="left:1847px;top:751px" width="10" height="8" viewBox="0 0 10 8" fill="none" stroke="#c5c5c5" stroke-width="1.2"><path d="M1.5 2L5 5.5L8.5 2"/></svg><svg class="a" style="left:1870px;top:748px" width="14" height="10" viewBox="0 0 14 10" fill="none" stroke="#c5c5c5" stroke-width="1.3"><path d="M1.5 8L7 2.5L12.5 8"/></svg><svg class="a" style="left:1894px;top:748px" width="12" height="12" viewBox="0 0 12 12" fill="none" stroke="#c5c5c5" stroke-width="1.3"><path d="M1 1L11 11M11 1L1 11"/></svg><div class="a" style="left:1795px;top:773px;width:1px;height:207px;background:rgba(128,128,128,0.35)"></div><div class="a" style="left:1796px;top:797px;width:124px;height:22px;background:#37373d"></div><svg class="a" style="left:1806px;top:777px" width="18" height="16" viewBox="0 0 18 16" fill="none" stroke="#c5c5c5" stroke-width="1.2">
<path d="M2.5 1.5H16.5L15 14.5H1Z"/><path d="M5 4.5L8 7L5 9.5"/><path d="M8 11.5H12"/></svg><div class="a" style="left:1827px;top:777px;font-size:13.5px;line-height:18px;color:#cccccc">node</div><svg class="a" style="left:1806px;top:800px" width="18" height="16" viewBox="0 0 18 16" fill="none" stroke="#c5c5c5" stroke-width="1.2">
<path d="M2.5 1.5H16.5L15 14.5H1Z"/><path d="M5 4.5L8 7L5 9.5"/><path d="M8 11.5H12"/></svg><div class="a" style="left:1827px;top:800px;font-size:13.5px;line-height:18px;color:#cccccc">powershell</div><div class="a m" style="left:383px;top:791px;font-size:14px;line-height:18px;letter-spacing:-0.4px;-webkit-text-stroke:0.3px currentColor"><span style="color:#cccccc">Windows PowerShell</span></div><div class="a m" style="left:383px;top:809px;font-size:14px;line-height:18px;letter-spacing:-0.4px;-webkit-text-stroke:0.3px currentColor"><span style="color:#cccccc">Copyright (C) Microsoft Corporation. All rights reserved.</span></div><div class="a m" style="left:383px;top:845px;font-size:14px;line-height:18px;letter-spacing:-0.4px;-webkit-text-stroke:0.3px currentColor"><span style="color:#cccccc">Try the new cross-platform PowerShell https://aka.ms/pscore6</span></div><div class="a m" style="left:383px;top:881px;font-size:14px;line-height:18px;letter-spacing:-0.4px;-webkit-text-stroke:0.3px currentColor"><span style="color:#cccccc">PS C:\Users\erol.akgul\Desktop\react tutorial&gt; </span><span style="color:#e5e510">cd</span><span style="color:#cccccc"> reactapp</span></div><div class="a m" style="left:383px;top:899px;font-size:14px;line-height:18px;letter-spacing:-0.4px;-webkit-text-stroke:0.3px currentColor"><span style="color:#cccccc">PS C:\Users\erol.akgul\Desktop\react tutorial\reactapp&gt; </span><span style="color:#e5e510">npm</span><span style="color:#cccccc"> install react-pose</span></div><div class="a" style="left:1008px;top:898px;width:8px;height:18px;background:#cccccc"></div><svg class="a" style="left:0;top:0" width="1920" height="980" viewBox="0 0 1920 980">
<path d="M704.8 931.2 C725 939 740 945 760 945.8 C790 946 830 944 870 939 C895 936 915 933 929.5 933.8 C935 934 937 936 940 938 C950 943 965 944.5 985 944.6 C1005 944.7 1018 942 1030 937.5 C1040 934 1046 931 1050 930.3 C1056 929.5 1057 928.8 1060 926.5" fill="none" stroke="#ff0000" stroke-width="2.2" stroke-linecap="round"/></svg></body></html>
